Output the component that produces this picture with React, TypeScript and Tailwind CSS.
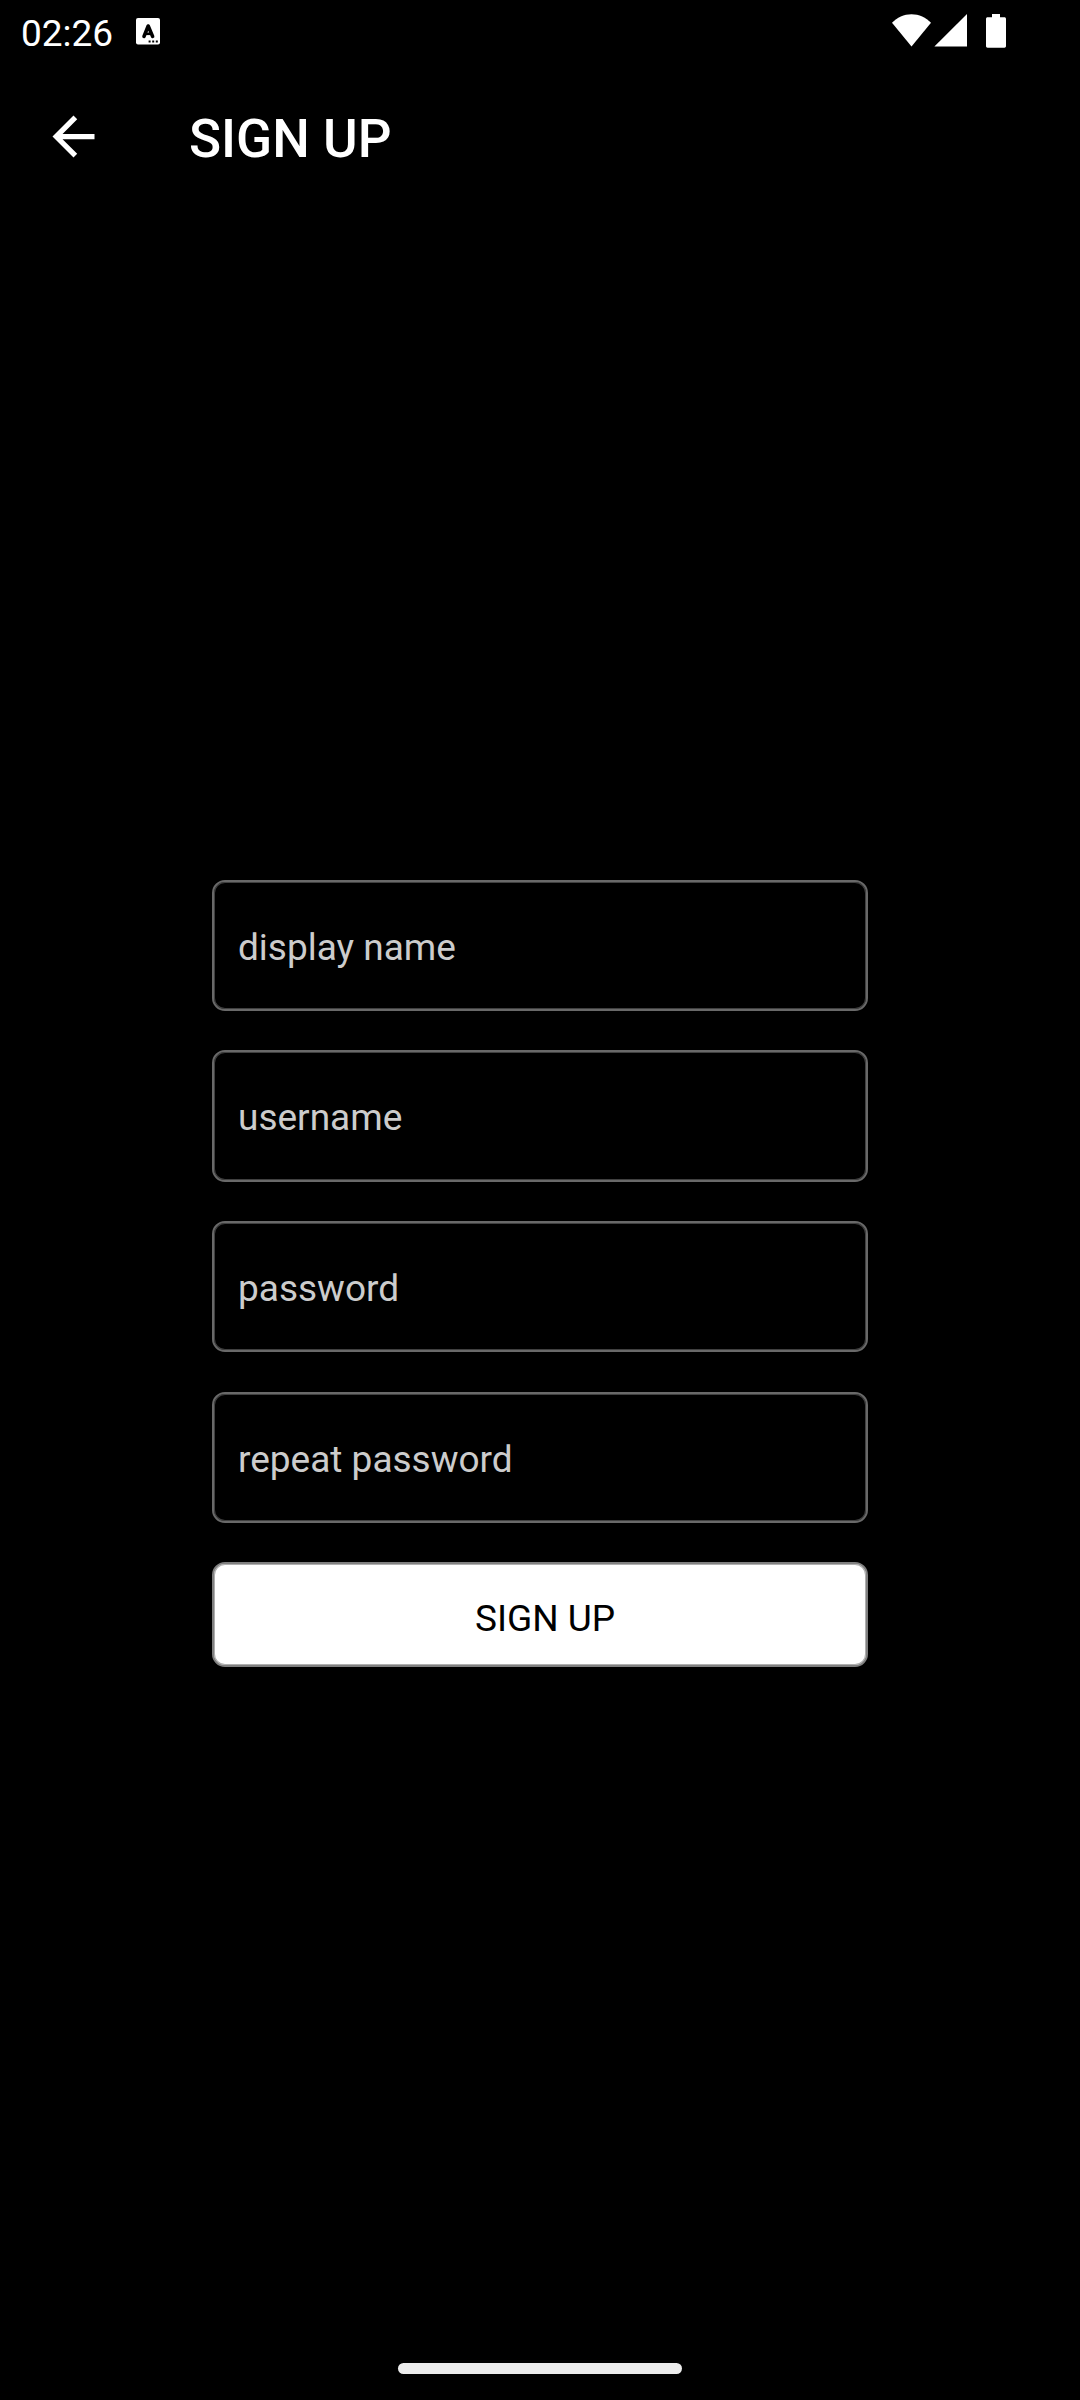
const fields = [
  { label: 'display name', box: 'h-[131px]' },
  { label: 'username', box: 'mt-[39px] h-[132px]' },
  { label: 'password', box: 'mt-[39px] h-[131px]' },
  { label: 'repeat password', box: 'mt-[40px] h-[131px]' },
];

function StatusBar() {
  return (
    <header className="flex h-[63px] items-start pl-[21px]">
      <span className="mt-[12px] w-[115px] text-[37px] leading-[43px]">02:26</span>
      <svg className="mt-[18px] h-[27px] w-[24px]" viewBox="0 0 24 27">
        <rect width="24" height="26.6" rx="2" fill="#fff" />
        <path d="M8 18.4 12.2 8 16.6 18.4" fill="none" stroke="#000" strokeWidth="3.6" strokeLinecap="round" strokeLinejoin="round" />
        <path d="M9.5 15.8h5.4" stroke="#000" strokeWidth="2.6" />
        <path d="M12.6 23.5h2M16.2 23.5h2M19.8 23.5h2" stroke="#000" strokeWidth="2" />
      </svg>
      <svg className="mt-[14px] ml-[732px] h-[33px] w-[39px]" viewBox="0 0 39 33">
        <path d="M0 8.8C5 3.4 12 .2 19.5.2S34 3.4 39 8.8L19.5 32.6z" fill="#fff" />
      </svg>
      <svg className="mt-[14px] ml-[3px] h-[33px] w-[33px]" viewBox="0 0 33 33">
        <path d="M33 0V32.6H.4z" fill="#fff" />
      </svg>
      <svg className="mt-[14px] ml-[19px] h-[34px] w-[20px]" viewBox="0 0 20 34">
        <path d="M6 0h8v3.3h4.4c.9 0 1.6.7 1.6 1.6v27.2c0 .9-.7 1.6-1.6 1.6H1.6C.7 33.7 0 33 0 32.1V4.9c0-.9.7-1.6 1.6-1.6H6z" fill="#fff" />
      </svg>
    </header>
  );
}

export default function App() {
  return (
    <div className="flex h-[2400px] w-[1080px] flex-col overflow-hidden bg-black font-[Roboto,sans-serif] text-white">
      <StatusBar />
      <div className="flex h-[147px] items-center pl-[42px]">
        <button aria-label="Back" className="mr-[84px]">
          <svg className="block h-[63px] w-[63px]" viewBox="0 0 24 24" fill="#fff">
            <path d="M20 11H7.83l5.59-5.59L12 4l-8 8 8 8 1.41-1.41L7.83 13H20v-2z" />
          </svg>
        </button>
        <h1 className="mt-[5px] text-[53px] leading-[62px] font-medium">SIGN UP</h1>
      </div>
      <form className="mx-auto mt-[670px] flex w-[656px] flex-col">
        {fields.map(({ label, box }) => (
          <label
            key={label}
            className={`${box} block rounded-[13px] border-2 border-[#696969] pt-[44px] pl-[24px] text-[37px] leading-[43px] text-[#cccccc] shadow-[inset_0_0_0_1px_#404040]`}
          >
            {label}
          </label>
        ))}
        <button
          type="button"
          className="mt-[39px] h-[105px] rounded-[13px] border-2 border-[#808080] bg-white pt-[8px] pl-[10px] text-[37px] leading-[43px] text-black shadow-[inset_0_0_0_1px_#b0b0b0]"
        >
          SIGN UP
        </button>
      </form>
      <div className="mx-auto mt-auto mb-[26px] h-[11px] w-[284px] rounded-full bg-[#ececec]" />
    </div>
  );
}
